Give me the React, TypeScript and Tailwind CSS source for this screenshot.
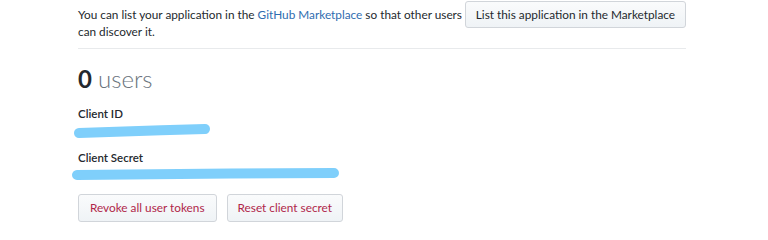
import React from "react";

const font = { fontFamily: "Lato, 'Noto Sans', sans-serif" };

function Scribble({ width, d }: { width: number; d: string }) {
  return (
    <svg width={width} height={14} viewBox={`0 0 ${width} 14`} className="block">
      <path d={d} stroke="#7fcffb" strokeWidth={10} strokeLinecap="round" fill="none" />
    </svg>
  );
}

export default function App() {
  return (
    <div className="w-[768px] h-[240px] bg-white overflow-hidden" style={font}>
      <div className="ml-[78px] w-[608px]">
        <div className="flex items-start justify-between pt-[1px]">
          <p className="text-[11.8px] leading-[17px] text-[#24292e] pt-[5px]">
            <span className="block whitespace-nowrap">
              You can list your application in the <a className="text-[#2f6db0]">GitHub Marketplace</a> so that other users
            </span>
            <span className="block">can discover it.</span>
          </p>
          <button className="h-[27px] px-[10px] rounded-[3px] border border-[#d1d5da] bg-gradient-to-b from-[#fafbfc] to-[#eff3f6] text-[11.8px] text-[#24292e] whitespace-nowrap">
            List this application in the Marketplace
          </button>
        </div>
        <div className="mt-[8px] border-t border-[#e8eaec]" />
        <div className="mt-[15px] text-[24px] leading-[30px]">
          <span className="font-bold text-[#24292e]">0</span>{" "}
          <span className="font-light text-[#6a737d]">users</span>
        </div>
        <div className="mt-[12px] text-[11.5px] leading-[16px] font-semibold text-[#24292e]">Client ID</div>
        <div className="-ml-[5px] mt-[2px]">
          <Scribble width={140} d="M6 9 C40 8, 90 6, 132 5" />
        </div>
        <div className="mt-[12px] text-[11.5px] leading-[16px] font-semibold text-[#24292e]">Client Secret</div>
        <div className="-ml-[7px] mt-[1px]">
          <Scribble width={270} d="M6 8 C80 7, 180 6, 263 6" />
        </div>
        <div className="mt-[13px] flex gap-[10px]">
          <button className="h-[28px] px-[11px] rounded-[3px] border border-[#d1d5da] bg-gradient-to-b from-[#fafbfc] to-[#eff3f6] text-[11.8px] text-[#b0264a] whitespace-nowrap">
            Revoke all user tokens
          </button>
          <button className="h-[28px] px-[10px] rounded-[3px] border border-[#d1d5da] bg-gradient-to-b from-[#fafbfc] to-[#eff3f6] text-[11.8px] text-[#b0264a] whitespace-nowrap">
            Reset client secret
          </button>
        </div>
      </div>
    </div>
  );
}
